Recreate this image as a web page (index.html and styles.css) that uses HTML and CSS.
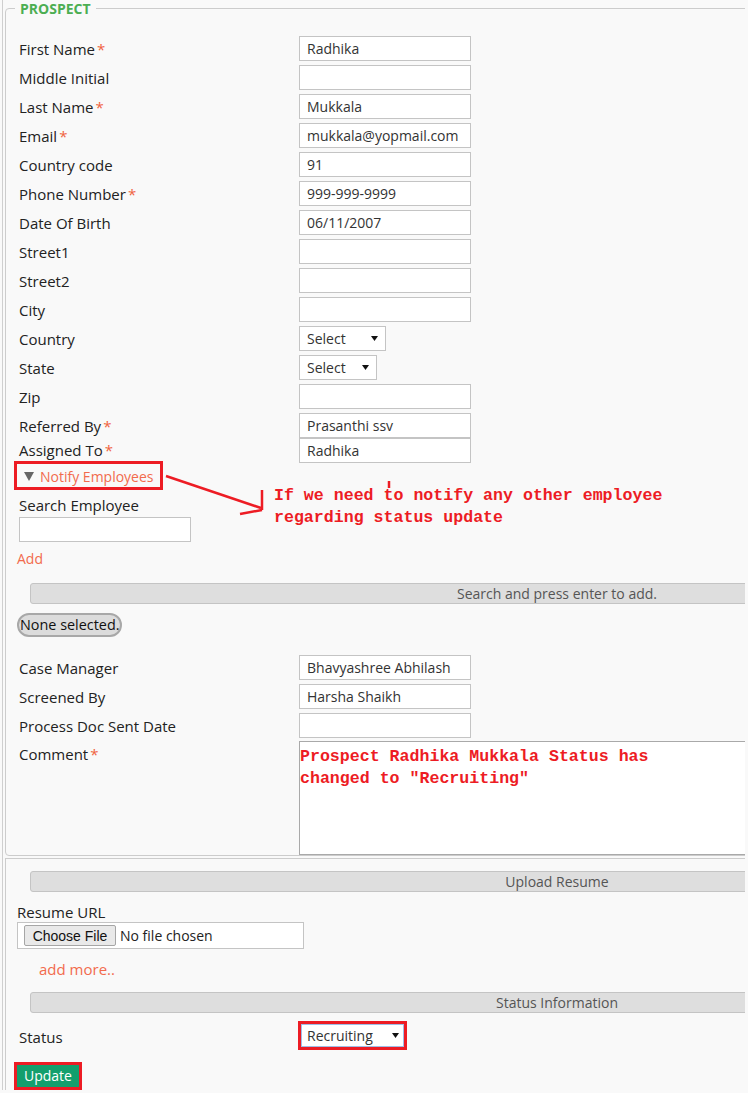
FILE: index.html
```html
<!DOCTYPE html>
<html>
<head>
<meta charset="utf-8">
<title>Prospect</title>
<link rel="stylesheet" href="styles.css">
</head>
<body>
<div class="page">
  <fieldset class="prospect">
    <legend>PROSPECT</legend>
    <div class="form">
      <div class="row"><label>First Name<span class="req">*</span></label><input class="field" value="Radhika"></div>
      <div class="row"><label>Middle Initial</label><input class="field" value=""></div>
      <div class="row"><label>Last Name<span class="req">*</span></label><input class="field" value="Mukkala"></div>
      <div class="row"><label>Email<span class="req">*</span></label><input class="field" value="mukkala@yopmail.com"></div>
      <div class="row"><label>Country code</label><input class="field" value="91"></div>
      <div class="row"><label>Phone Number<span class="req">*</span></label><input class="field" value="999-999-9999"></div>
      <div class="row"><label>Date Of Birth</label><input class="field" value="06/11/2007"></div>
      <div class="row"><label>Street1</label><input class="field" value=""></div>
      <div class="row"><label>Street2</label><input class="field" value=""></div>
      <div class="row"><label>City</label><input class="field" value=""></div>
      <div class="row"><label>Country</label><div class="select sel-country"><span>Select</span><svg class="caret" width="7" height="5" viewBox="0 0 7 5"><polygon points="0,0 7,0 3.5,5"/></svg></div></div>
      <div class="row"><label>State</label><div class="select sel-state"><span>Select</span><svg class="caret" width="7" height="5" viewBox="0 0 7 5"><polygon points="0,0 7,0 3.5,5"/></svg></div></div>
      <div class="row"><label>Zip</label><input class="field" value=""></div>
      <div class="row tight"><label>Referred By<span class="req">*</span></label><input class="field" value="Prasanthi ssv"></div>
      <div class="row tight"><label class="assigned">Assigned To<span class="req">*</span></label><input class="field" value="Radhika"></div>

      <div class="notify">
        <svg class="tri" width="10" height="9" viewBox="0 0 10 9"><polygon points="0,0 10,0 5,9"/></svg>
        <span class="link small">Notify Employees</span>
      </div>

      <label class="block search-label">Search Employee</label>
      <input class="field search-input" value="">
      <div class="link small add">Add</div>

      <div class="bar bar-first">Search and press enter to add.</div>
      <div class="pill">None selected.</div>

      <div class="row first-after"><label>Case Manager</label><input class="field" value="Bhavyashree Abhilash"></div>
      <div class="row"><label>Screened By</label><input class="field" value="Harsha Shaikh"></div>
      <div class="row doc"><label>Process Doc Sent Date</label><input class="field" value=""></div>
      <div class="row top last"><label class="comment-label">Comment<span class="req">*</span></label><div class="comment">Prospect Radhika Mukkala Status has
changed to "Recruiting"</div></div>
    </div>
  </fieldset>

  <section class="upload">
    <div class="bar">Upload Resume</div>
    <label class="block resume-label">Resume URL</label>
    <div class="filebox"><span class="choose">Choose File</span><span class="nofile">No file chosen</span></div>
    <div class="link addmore">add more..</div>
    <div class="bar bar-status">Status Information</div>
    <div class="status-row">
      <label>Status</label>
      <div class="status-box"><div class="select sel-status"><span>Recruiting</span><svg class="caret" width="7" height="5" viewBox="0 0 7 5"><polygon points="0,0 7,0 3.5,5"/></svg></div></div>
    </div>
    <div class="update-box"><button class="update">Update</button></div>
  </section>
</div>

<svg class="annot-arrow" width="748" height="1093" viewBox="0 0 748 1093">
  <line x1="166" y1="476" x2="261" y2="508"/>
  <line x1="262" y1="490" x2="262" y2="510"/>
  <line x1="240" y1="514" x2="262" y2="510"/>
  <line x1="389" y1="481" x2="389" y2="488"/>
</svg>
<div class="annot-text">If we need to notify any other employee
regarding status update</div>
</body>
</html>
```
FILE: styles.css
```css
html, body {
  margin: 0;
  padding: 0;
}
body {
  position: relative;
  background: #f9f9f9;
  font-family: "Open Sans", "DejaVu Sans", sans-serif;
  color: #222;
  width: 748px;
  height: 1093px;
  overflow: hidden;
}
.page {
  box-sizing: border-box;
  width: 743px;
  margin-left: 2px;
  border-left: 1px solid #cfcfcf;
  padding-left: 2px;
  padding-top: 1px;
  overflow: hidden;
}
.prospect {
  box-sizing: border-box;
  width: 1100px;
  min-width: 0;
  margin: 0;
  border: 1px solid #cccccc;
  border-radius: 4px;
  padding: 20px 0 0 9px;
}
.prospect legend {
  padding: 0 5px;
  font-size: 14px;
  line-height: 15px;
  font-weight: 700;
  color: #4cae52;
}
.form {
  padding-left: 4px;
}
.row {
  display: grid;
  grid-template-columns: 280px auto;
  align-items: center;
  height: 25px;
  margin-bottom: 4px;
}
.row.tight {
  margin-bottom: 0;
}
.row.top {
  align-items: start;
  height: auto;
}
.row.doc {
  margin-bottom: 3px;
}
.row.last {
  margin-bottom: 0;
}
label {
  font-size: 15px;
  line-height: 20px;
  color: #222;
}
.assigned {
  margin-top: -2px;
}
.comment-label {
  padding-top: 3px;
}
.req {
  color: #f0633f;
  margin-left: 2px;
}
.block {
  display: block;
}
.field {
  box-sizing: border-box;
  width: 172px;
  height: 25px;
  margin: 0;
  border: 1px solid #c4c4c4;
  background: #fff;
  padding: 0 7px;
  font-family: "Open Sans", sans-serif;
  font-size: 14px;
  color: #333;
  outline: none;
}
.select {
  box-sizing: border-box;
  height: 25px;
  border: 1px solid #c4c4c4;
  background: #fff;
  display: flex;
  align-items: center;
  justify-content: space-between;
  padding: 0 7px 0 7px;
  font-size: 14px;
  color: #333;
}
.sel-country { width: 87px; }
.sel-state { width: 78px; }
.caret {
  fill: #111;
  display: block;
}
.notify {
  box-sizing: border-box;
  display: inline-flex;
  align-items: center;
  gap: 6px;
  height: 29px;
  margin: -2px 0 0 -5px;
  padding: 2px 6px 0 7px;
  border: 3px solid #ed1c24;
}
.tri {
  fill: #666;
  display: block;
}
.link {
  color: #f26b4d;
  font-size: 15px;
  line-height: 20px;
}
.link.small {
  font-size: 14px;
}
.search-label {
  margin-top: 5px;
}
.search-input {
  display: block;
  margin-top: 2px;
}
.add {
  margin: 7px 0 0 -2px;
}
.bar {
  box-sizing: border-box;
  width: 1054px;
  height: 21px;
  border: 1px solid #c4c4c4;
  border-radius: 3px;
  background: #dedede;
  text-align: center;
  font-size: 14px;
  line-height: 19px;
  color: #555;
}
.bar-first {
  margin: 14px 0 0 11px;
}
.pill {
  display: inline-block;
  box-sizing: border-box;
  height: 24px;
  margin: 9px 0 0 -2px;
  padding: 0 1px;
  border: 2px solid #a8a8a8;
  border-radius: 12px;
  background: #dcdcdc;
  font-size: 14.4px;
  line-height: 20px;
  color: #111;
}
.first-after {
  margin-top: 18px;
}
.comment {
  box-sizing: border-box;
  width: 600px;
  height: 114px;
  border: 1px solid #a9a9a9;
  background: #fff;
  padding: 4px 0 0 0;
  font-family: "Liberation Mono", "DejaVu Sans Mono", monospace;
  font-weight: 700;
  font-size: 16.6px;
  line-height: 22px;
  color: #ed1c24;
  white-space: pre;
}
.upload {
  border-top: 1px solid #cccccc;
  border-left: 1px solid #cccccc;
  margin-top: 2px;
  padding: 12px 0 0 11px;
  width: 1100px;
}
.upload .bar {
  margin-left: 13px;
}
.resume-label {
  margin-top: 10px;
}
.filebox {
  box-sizing: border-box;
  width: 287px;
  height: 27px;
  border: 1px solid #c4c4c4;
  background: #fff;
  display: flex;
  align-items: center;
  gap: 4px;
  padding-left: 6px;
}
.choose {
  box-sizing: border-box;
  width: 92px;
  height: 21px;
  border: 1px solid #a6a6a6;
  border-radius: 2px;
  background: #e9e9e9;
  font-family: "Liberation Sans", Arial, sans-serif;
  font-size: 14px;
  line-height: 20px;
  text-align: center;
  color: #111;
}
.nofile {
  font-size: 14px;
  color: #222;
}
.addmore {
  margin: 10px 0 0 22px;
}
.bar-status {
  margin-top: 13px;
}
.status-row {
  display: grid;
  grid-template-columns: 281px auto;
  align-items: center;
  margin-top: 8px;
}
.status-row label {
  padding-left: 2px;
  padding-top: 2px;
}
.status-box {
  box-sizing: border-box;
  width: 109px;
  height: 29px;
  border: 3px solid #ed1c24;
}
.sel-status {
  width: 100%;
  height: 100%;
  border: 1px solid #9fbde6;
  padding: 0 4px 0 5px;
}
.update-box {
  display: inline-block;
  margin: 12px 0 0 -3px;
  border: 3px solid #ed1c24;
  line-height: 0;
}
.update {
  height: 22px;
  margin: 0;
  border: none;
  padding: 0 7px;
  background: #139f6d;
  color: #fff;
  font-family: "Open Sans", sans-serif;
  font-size: 14px;
  line-height: 22px;
}
.annot-arrow {
  position: absolute;
  left: 0;
  top: 0;
  pointer-events: none;
}
.annot-arrow line {
  stroke: #ed1c24;
  stroke-width: 2.5;
}
.annot-text {
  position: absolute;
  left: 274px;
  top: 485px;
  font-family: "Liberation Mono", "DejaVu Sans Mono", monospace;
  font-weight: 700;
  font-size: 16.6px;
  line-height: 22px;
  color: #ed1c24;
  white-space: pre;
}
```
